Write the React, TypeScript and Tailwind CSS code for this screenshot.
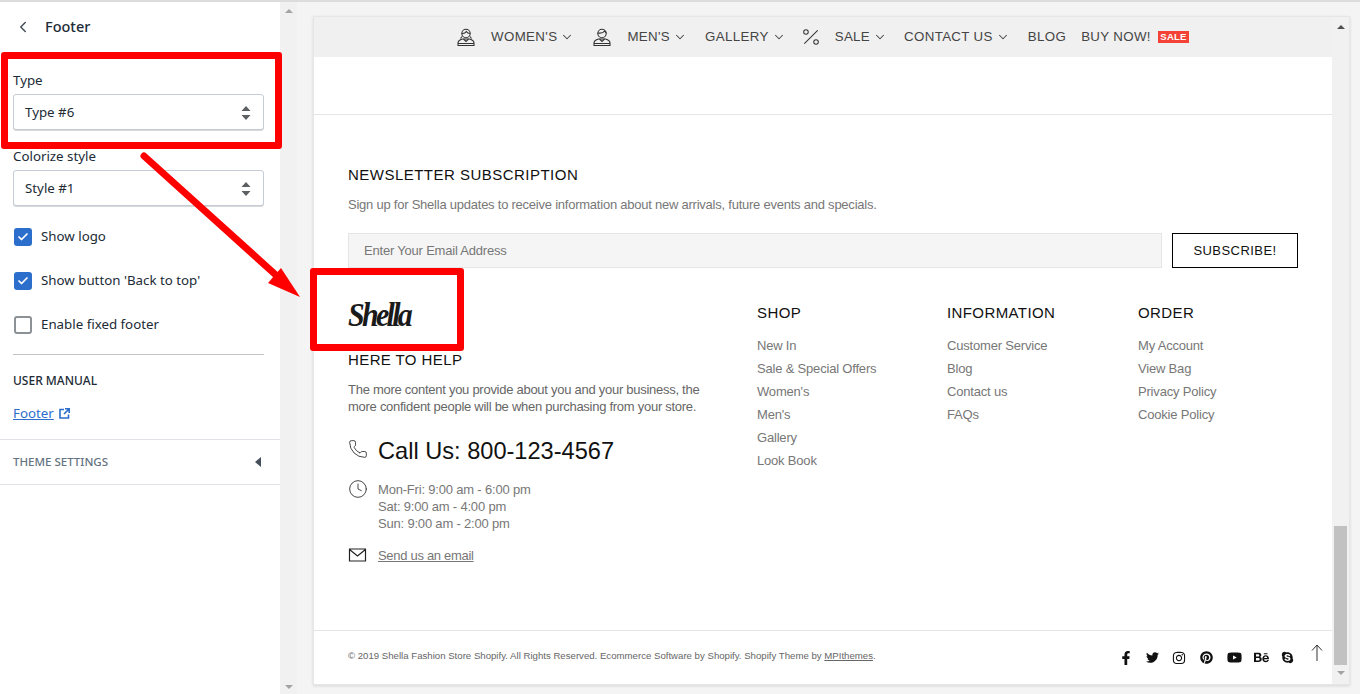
import { ChevronDown, ChevronLeft, Check, Clock, Percent, Phone } from "lucide-react";
import { FaBehance, FaFacebookF, FaInstagram, FaPinterest, FaSkype, FaTwitter, FaYoutube } from "react-icons/fa";

const columns = [
  { title: "SHOP", width: "w-[190px]", links: ["New In", "Sale & Special Offers", "Women's", "Men's", "Gallery", "Look Book"] },
  { title: "INFORMATION", width: "w-[191px]", links: ["Customer Service", "Blog", "Contact us", "FAQs"] },
  { title: "ORDER", width: "w-[160px]", links: ["My Account", "View Bag", "Privacy Policy", "Cookie Policy"] },
];

const Person = ({ female }: { female?: boolean }) => (
  <svg width="18" height="18" viewBox="0 0 18 18" fill="none" stroke="#333" strokeWidth="1.100">
    <circle cx="9" cy="5.500" r="4.200" />
    {female ? (
      <path d="M4.800 5.500c1.500.2 3.500-.3 4.500-2 .8 1.200 2.200 2 3.900 2M5 8.500L3.500 10.500M13 8.500l1.500 2" />
    ) : (
      <path d="M4.800 5c2 .3 5.500.2 6.700-2 .7.6 1.500 1.300 1.700 2.200" />
    )}
    <path d="M1 17.500v-2.500c0-2 2-3.300 4.500-4h7c2.500.7 4.500 2 4.500 4v2.500z" />
    <path d="M1 15.500h16M6.500 11l2.500 2.500 2.500-2.500" />
  </svg>
);

const Stepper = () => (
  <svg width="10" height="14" viewBox="0 0 10 14" fill="#5c5f62">
    <path d="M5 0l4.500 5H.5zM5 14L.5 9h9z" />
  </svg>
);

const SelectBox = ({ value }: { value: string }) => (
  <div className="h-9 flex items-center justify-between pt-px pl-[11px] pr-[12px] bg-white border border-[#c4cdd5] rounded-[3px] shadow-[0_1px_0_rgba(0,0,0,0.15)] text-[13.300px] text-[#212b36]">
    {value}
    <Stepper />
  </div>
);

const CheckRow = ({ label, checked }: { label: string; checked?: boolean }) => (
  <div className="h-[18px] flex items-center gap-[9px] pl-px text-[13.300px] text-[#212b36]">
    {checked ? (
      <span className="w-[18px] h-[18px] rounded-[3px] bg-[#2c6ecb] flex items-center justify-center">
        <Check size={12} color="white" strokeWidth={3.500} />
      </span>
    ) : (
      <span className="w-[18px] h-[18px] rounded-[3px] bg-white border-2 border-[#8c9196]" />
    )}
    {label}
  </div>
);

const Sidebar = () => (
  <aside className="w-[280px] shrink-0 bg-white font-['Noto_Sans',sans-serif] border-t-2 border-[#dcdcdc]">
    <div className="h-[50px] flex items-center pl-[14px] gap-[13px] text-[14.500px] font-medium text-[#212b36]">
      <ChevronLeft size={18} strokeWidth={2} color="#454f5b" />
      Footer
    </div>
    <div className="pl-[13px] pr-[16px] pt-[18px]">
      <div className="text-[13.300px] leading-[20px] text-[#212b36] mb-[4px]">Type</div>
      <SelectBox value="Type #6" />
      <div className="text-[13.300px] leading-[20px] text-[#212b36] mt-[16px] mb-[4px]">Colorize style</div>
      <SelectBox value="Style #1" />
      <div className="flex flex-col gap-[26px] mt-[22px]">
        <CheckRow label="Show logo" checked />
        <CheckRow label="Show button 'Back to top'" checked />
        <CheckRow label="Enable fixed footer" />
      </div>
      <div className="border-t border-[#c4c4c4] mt-[20px] pt-[18px] text-[12px] leading-[16px] font-medium text-[#212b36]">
        USER MANUAL
      </div>
      <div className="mt-[14px] flex items-center gap-[5px] text-[13.300px] leading-[20px] text-[#2c6ecb]">
        <span className="underline">Footer</span>
        <svg width="11" height="11" viewBox="0 0 11 11" fill="none" stroke="currentColor" strokeWidth="1.600">
          <path d="M5 1.500H1v8.500h8.500V6.500M6 .8h4.200V5M10 1L5 6" />
        </svg>
      </div>
    </div>
    <div className="mt-[16px] h-[46px] px-[13px] flex items-center justify-between border-y border-[#dfe3e8] text-[11.500px] font-medium text-[#637381]">
      THEME SETTINGS
      <span className="w-0 h-0 mr-[6px] border-y-[5px] border-y-transparent border-r-[6px] border-r-[#454f5b]" />
    </div>
  </aside>
);

const Nav = () => (
  <div className="h-10 shrink-0 bg-[#f0f0f0] flex items-center justify-center text-[13.300px] tracking-[0.35px] text-[#444]">
    <Person female />
    <span className="ml-[16px] mr-[19px]"><NavItem label="WOMEN'S" /></span>
    <Person />
    <span className="ml-[16px] mr-[18px]"><NavItem label="MEN'S" /></span>
    <span className="mr-[14px]"><NavItem label="GALLERY" /></span>
    <Percent size={22} strokeWidth={1.100} color="#333" />
    <span className="ml-[13px] mr-[17px]"><NavItem label="SALE" /></span>
    <span className="mr-[18px]"><NavItem label="CONTACT US" /></span>
    <span className="mr-[15px]">BLOG</span>
    <span>BUY NOW!</span>
    <span className="ml-[7px] h-[12px] w-[31px] bg-[#f44336] text-white text-[9.500px] leading-[12px] font-bold text-center tracking-[0.2px]">
      SALE
    </span>
  </div>
);

const NavItem = ({ label }: { label: string }) => (
  <span className="flex items-center gap-[3px]">
    {label}
    <ChevronDown size={14} strokeWidth={1.800} />
  </span>
);

const ContactRow = ({ icon, children }: { icon: React.ReactNode; children: React.ReactNode }) => (
  <div className="flex gap-[12px]">
    <span className="w-[18px] shrink-0">{icon}</span>
    {children}
  </div>
);

const Preview = () => (
  <main className="flex-1 min-w-0 bg-[#f4f4f4] border-t-2 border-[#dcdcdc] pt-[14px] pl-[16px] pr-[10px] pb-[9px]">
    <div className="h-full flex bg-white border border-[#e6e6e6] shadow-[0_1px_3px_rgba(0,0,0,0.12)] font-['Liberation_Sans',sans-serif]">
      <div className="flex-1 min-w-0 flex flex-col">
        <Nav />
        <div className="h-[58px] shrink-0 border-b border-[#e5e5e5]" />
        <div className="px-[34px] pt-[50px]">
          <h3 className="text-[15px] leading-[20px] tracking-[0.48px] text-[#111]">NEWSLETTER SUBSCRIPTION</h3>
          <p className="mt-[10px] text-[13px] leading-[20px] tracking-[-0.235px] text-[#777]">
            Sign up for Shella updates to receive information about new arrivals, future events and specials.
          </p>
          <div className="mt-[18px] flex gap-[10px]">
            <div className="flex-1 h-[35px] flex items-center px-[15px] bg-[#f5f5f5] border border-[#e5e5e5] text-[13px] tracking-[-0.2px] text-[#777]">
              Enter Your Email Address
            </div>
            <div className="w-[126px] h-[35px] flex items-center justify-center border border-black text-[13px] tracking-[0.45px] text-[#111]">
              SUBSCRIBE!
            </div>
          </div>
          <div className="flex mt-[20px]">
            <div className="w-[409px] shrink-0">
              <div className="h-[62px] pt-[14px] text-[30px] leading-[32px] font-['Liberation_Serif',serif] font-bold italic tracking-[-2.700px] text-[#1a1a1a] scale-y-110 origin-bottom-left">
                Shella
              </div>
              <h4 className="text-[15px] leading-[20px] tracking-[0.4px] text-[#111]">HERE TO HELP</h4>
              <p className="mt-[11px] text-[13px] leading-[17px] tracking-[-0.27px] text-[#666]">
                The more content you provide about you and your business, the
                <br />
                more confident people will be when purchasing from your store.
              </p>
              <div className="mt-[21px] flex flex-col">
                <ContactRow icon={<Phone size={20} strokeWidth={1} color="#222" className="mt-[3px]" />}>
                  <span className="text-[23.600px] leading-[30px] text-[#111]">Call Us: 800-123-4567</span>
                </ContactRow>
                <div className="mt-[15px]">
                  <ContactRow icon={<Clock size={20} strokeWidth={1} color="#222" className="-mt-[2px]" />}>
                    <span className="text-[13px] leading-[17px] tracking-[-0.19px] text-[#777]">
                      Mon-Fri: 9:00 am - 6:00 pm
                      <br />
                      Sat: 9:00 am - 4:00 pm
                      <br />
                      Sun: 9:00 am - 2:00 pm
                    </span>
                  </ContactRow>
                </div>
                <div className="mt-[15px]">
                  <ContactRow
                    icon={
                      <svg width="19" height="14" viewBox="0 0 19 14" fill="none" stroke="#222" strokeWidth="1.200" className="mt-[1px]">
                        <path d="M1.500 1h16v12h-16zM1.500 1.500l8 6.500 8-6.500" />
                      </svg>
                    }
                  >
                    <span className="text-[13px] leading-[17px] tracking-[-0.3px] text-[#777] underline">Send us an email</span>
                  </ContactRow>
                </div>
              </div>
            </div>
            {columns.map((col) => (
              <div key={col.title} className={`${col.width} shrink-0 pt-[15px]`}>
                <h4 className="text-[15px] leading-[20px] tracking-[0.4px] text-[#111]">{col.title}</h4>
                <ul className="mt-[14px] flex flex-col gap-[6px]">
                  {col.links.map((link) => (
                    <li key={link} className="text-[13px] leading-[17px] tracking-[-0.19px] text-[#777]">{link}</li>
                  ))}
                </ul>
              </div>
            ))}
          </div>
        </div>
        <div className="mt-auto h-[54px] border-t border-[#e5e5e5] pl-[34px] pr-[9px] flex items-center justify-between">
          <span className="text-[9.650px] -mt-[2px] text-[#666]">
            © 2019 Shella Fashion Store Shopify. All Rights Reserved. Ecommerce Software by Shopify. Shopify Theme by{" "}
            <span className="underline">MPIthemes</span>.
          </span>
          <div className="flex items-center text-[#111]">
            <FaFacebookF size={14} />
            <FaTwitter size={13} className="ml-[13px]" />
            <FaInstagram size={14} className="ml-[13px]" />
            <FaPinterest size={13} className="ml-[14px]" />
            <FaYoutube size={15} className="ml-[14px]" />
            <FaBehance size={15} className="ml-[12px]" />
            <FaSkype size={13} className="ml-[12px]" />
            <svg width="12" height="17" viewBox="0 0 12 17" fill="none" stroke="#333" strokeWidth="1" className="ml-[17px] -mt-[10px]">
              <path d="M6 17V1M1 6.500L6 1l5 5.500" />
            </svg>
          </div>
        </div>
      </div>
      {/* page scrollbar */}
      <div className="w-[17px] shrink-0 bg-[#f1f1f1] flex flex-col items-center pt-[8px] pb-[9px]">
        <span className="w-0 h-0 border-x-[4px] border-x-transparent border-b-[4px] border-b-[#505050]" />
        <span className="mt-auto mb-[6px] w-[13px] h-[139px] bg-[#c1c1c1]" />
        <span className="w-0 h-0 border-x-[4px] border-x-transparent border-t-[4px] border-t-[#a3a3a3]" />
      </div>
    </div>
  </main>
);

const App = () => (
  <div className="relative w-full h-screen flex overflow-hidden">
    <Sidebar />
    <div className="w-[17px] shrink-0 bg-[#f1f1f1] border-t-2 border-[#dcdcdc] flex flex-col items-center justify-between pt-[7px] pb-[5px]">
      <span className="w-0 h-0 border-x-[4px] border-x-transparent border-b-[4px] border-b-[#a3a3a3]" />
      <span className="w-0 h-0 border-x-[4px] border-x-transparent border-t-[4px] border-t-[#a3a3a3]" />
    </div>
    <Preview />
    {/* red annotations drawn over the screenshot */}
    <div className="absolute left-[1px] top-[52px] w-[281px] h-[97px] border-[7px] border-[#ff0000] rounded-[3px]" />
    <div className="absolute left-[310px] top-[268px] w-[154px] h-[83px] border-[7px] border-[#ff0000] rounded-[3px]" />
    <svg className="absolute left-0 top-0 pointer-events-none" width="1360" height="694">
      <path d="M144 156L277 276" stroke="#ff0000" strokeWidth="7" strokeLinecap="round" />
      <path d="M300 297L268 283L281 268z" fill="#ff0000" />
    </svg>
  </div>
);

export default App;
